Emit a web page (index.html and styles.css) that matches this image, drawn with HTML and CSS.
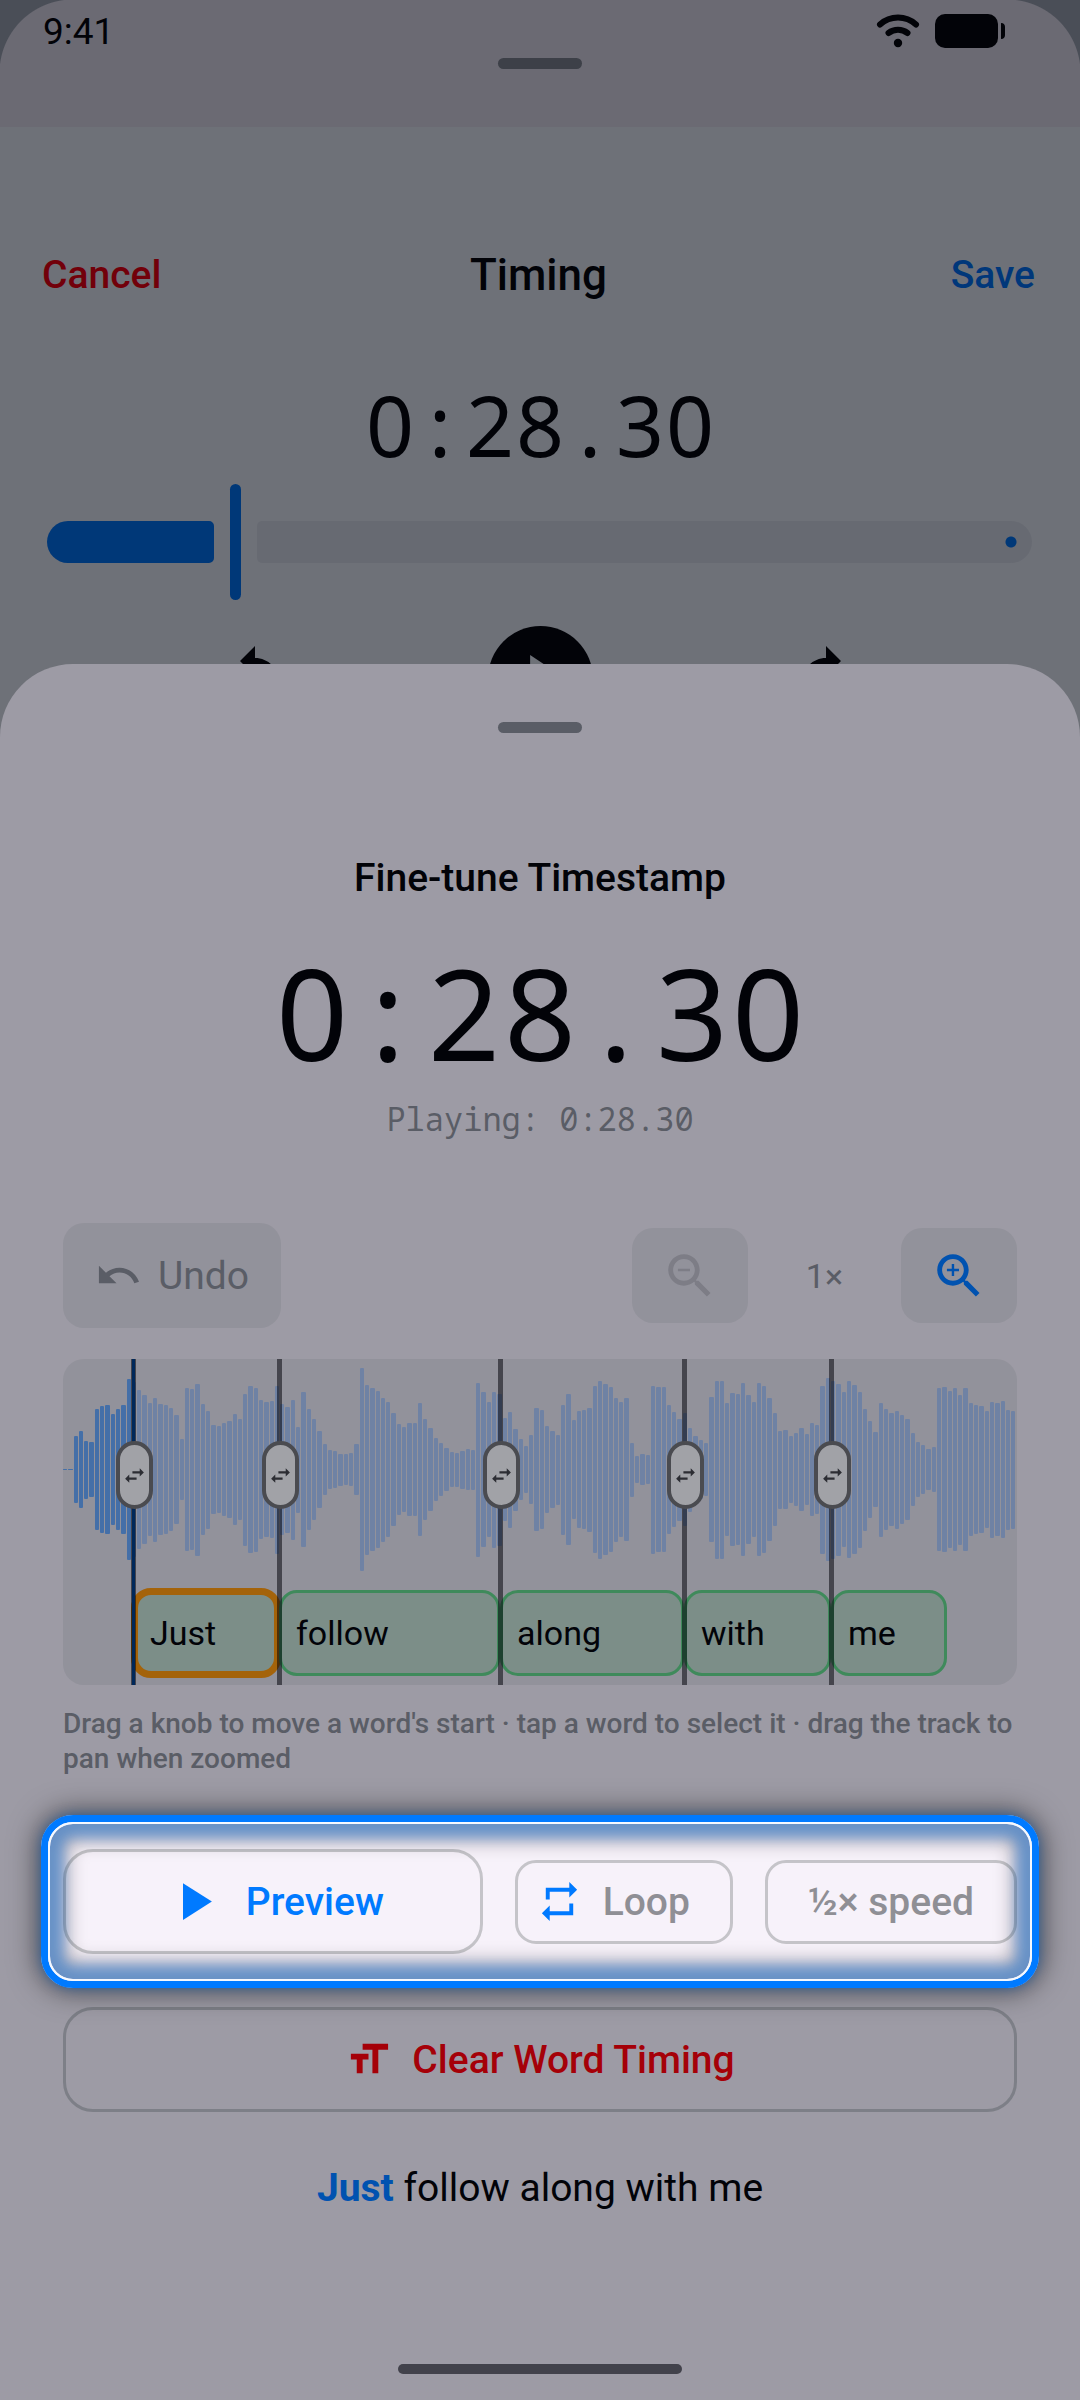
FILE: index.html
```html
<!DOCTYPE html>
<html lang="en">
<head>
    <meta charset="UTF-8">
    <meta name="viewport" content="width=device-width, initial-scale=1.0">
    <title>Fine-tune Timestamp</title>
    <link rel="stylesheet" href="styles.css">
</head>
<body>
    <div class="timing-screen">
        <div class="top-strip">
            <div class="status-bar">
                <span class="status-time">9:41</span>
                <div class="status-icons">
                    <svg class="wifi" viewBox="0 0 44 36" aria-hidden="true">
                        <path d="M4 11.500a27 27 0 0 1 36 0" fill="none" stroke="currentColor" stroke-width="6" stroke-linecap="round"/>
                        <path d="M12.500 20a16 16 0 0 1 19 0" fill="none" stroke="currentColor" stroke-width="6" stroke-linecap="round"/>
                        <circle cx="22" cy="30" r="4.200" fill="currentColor"/>
                    </svg>
                    <svg class="battery" viewBox="0 0 72 36" aria-hidden="true">
                        <rect x="0" y="1" width="63" height="34" rx="10" fill="currentColor"/>
                        <path d="M66 10c3 0 4 2 4 4v8c0 2-1 4-4 4z" fill="currentColor"/>
                    </svg>
                </div>
            </div>
            <div class="handle"></div>
        </div>

        <div class="nav">
            <button class="nav-cancel" type="button">Cancel</button>
            <h1>Timing</h1>
            <button class="nav-save" type="button">Save</button>
        </div>

        <div class="clock clock-small">
            <span>0</span><span>:</span><span>2</span><span>8</span><span>.</span><span>3</span><span>0</span>
        </div>

        <div class="slider">
            <div class="slider-active"></div>
            <div class="slider-thumb"></div>
            <div class="slider-rest"></div>
            <input type="range" min="0" max="100" value="18" aria-label="Playback position">
        </div>

        <div class="player">
            <button type="button" aria-label="Back">
                <svg viewBox="0 0 24 24"><path d="M12 5V1L7 6l5 5V7c3.310 0 6 2.690 6 6s-2.690 6-6 6-6-2.690-6-6H4c0 4.420 3.580 8 8 8s8-3.580 8-8-3.580-8-8-8z"/></svg>
            </button>
            <button class="player-play" type="button" aria-label="Play">
                <svg viewBox="0 0 24 24"><path d="M8.700 4l12 8-12 8z"/></svg>
            </button>
            <button type="button" aria-label="Forward">
                <svg viewBox="0 0 24 24"><path d="M12 5V1l5 5-5 5V7c-3.310 0-6 2.690-6 6s2.690 6 6 6 6-2.690 6-6h2c0 4.420-3.580 8-8 8s-8-3.580-8-8 3.580-8 8-8z"/></svg>
            </button>
        </div>
    </div>

    <main class="sheet">
        <div class="handle"></div>
        <h2>Fine-tune Timestamp</h2>
        <div class="clock clock-large">
            <span>0</span><span>:</span><span>2</span><span>8</span><span>.</span><span>3</span><span>0</span>
        </div>
        <p class="playing">Playing: 0:28.30</p>

        <div class="toolbar">
            <button class="tool undo" type="button">
                <svg viewBox="0 0 24 24"><path d="M12.500 8c-2.650 0-5.050.990-6.900 2.600L2 7v9h9l-3.620-3.620c1.390-1.160 3.160-1.880 5.120-1.880 3.540 0 6.550 2.310 7.600 5.500l2.370-.780C21.080 11.030 17.150 8 12.500 8z"/></svg>
                Undo
            </button>
            <div class="zoom">
                <button class="tool zoom-out" type="button" aria-label="Zoom out" disabled>
                    <svg viewBox="0 0 24 24"><path d="M15.500 14h-.790l-.280-.270C15.410 12.590 16 11.110 16 9.500 16 5.910 13.090 3 9.500 3S3 5.910 3 9.500 5.910 16 9.500 16c1.610 0 3.090-.590 4.230-1.570l.270.280v.790l5 4.990L20.490 19l-4.990-5zm-6 0C7.010 14 5 11.990 5 9.500S7.010 5 9.500 5 14 7.010 14 9.500 11.990 14 9.500 14zM7 9h5v1H7z"/></svg>
                </button>
                <span class="zoom-level">1×</span>
                <button class="tool zoom-in" type="button" aria-label="Zoom in">
                    <svg viewBox="0 0 24 24"><path d="M15.500 14h-.790l-.280-.270C15.410 12.590 16 11.110 16 9.500 16 5.910 13.090 3 9.500 3S3 5.910 3 9.500 5.910 16 9.500 16c1.610 0 3.090-.590 4.230-1.570l.270.280v.790l5 4.990L20.490 19l-4.990-5zm-6 0C7.010 14 5 11.990 5 9.500S7.010 5 9.500 5 14 7.010 14 9.500 11.990 14 9.500 14zm.5-7H9v2H7v1h2v2h1v-2h2V9h-2V7z"/></svg>
                </button>
            </div>
        </div>

        <div class="track">
            <div class="waveform" id="waveform"></div>
            <div class="words" id="words"></div>
        </div>
        <p class="hint">Drag a knob to move a word's start · tap a word to select it · drag the track to pan when zoomed</p>

        <div class="spotlight">
            <button class="preview" type="button">
                <svg viewBox="0 0 24 24"><path d="M8 5v14l11-7z"/></svg>
                Preview
            </button>
            <button class="chip loop" type="button">
                <svg viewBox="0 0 24 24"><path d="M7 7h10v3l4-4-4-4v3H5v6h2V7zm10 10H7v-3l-4 4 4 4v-3h12v-6h-2v4z"/></svg>
                Loop
            </button>
            <button class="chip" type="button">½× speed</button>
        </div>

        <button class="clear" type="button">
            <svg viewBox="0 0 24 24"><path d="M9 4v3h5v12h3V7h5V4H9zm-6 8h3v7h3v-7h3V9H3v3z"/></svg>
            Clear Word Timing
        </button>
        <p class="lyric"><strong>Just</strong> follow along with me</p>
        <div class="home-indicator"></div>
    </main>

    <script src="script.js"></script>
</body>
</html>
```
FILE: styles.css
```css
* {
    box-sizing: border-box;
}
body {
    margin: 0;
    min-height: 100vh;
    display: flex;
    flex-direction: column;
    background-color: #6e7178;
    color: #020308;
    font-family: Roboto, sans-serif;
    font-size: 39px;
}
h1, h2, p {
    margin: 0;
}
button {
    font: inherit;
    color: inherit;
    background: none;
    border: none;
    padding: 0;
    display: flex;
    align-items: center;
    justify-content: center;
    cursor: pointer;
}
button svg {
    display: block;
    fill: currentColor;
    width: 47px;
    height: 47px;
}

/* Timing screen behind the sheet */
.top-strip {
    height: 127px;
    background: radial-gradient(circle at 73px 73px, #6b6a73 73px, #4a4e57 74px) left top / 73px 73px no-repeat,
        radial-gradient(circle at 0 73px, #6b6a73 73px, #4a4e57 74px) right top / 73px 73px no-repeat,
        #6b6a73;
}
.status-bar {
    display: flex;
    justify-content: space-between;
    align-items: center;
    height: 58px;
    padding: 4px 73px 0 43px;
}
.status-time {
    font-size: 37px;
}
.status-icons {
    display: flex;
    align-items: center;
    gap: 15px;
}
.wifi {
    width: 44px;
    height: 36px;
}
.battery {
    width: 72px;
    height: 36px;
}
.handle {
    width: 84px;
    height: 11px;
    margin: 0 auto;
    border-radius: 6px;
    background-color: #3d4048;
}
.nav {
    display: grid;
    grid-template-columns: 1fr auto 1fr;
    align-items: center;
    padding: 121px 45px 0 42px;
    font-weight: 500;
}
.nav h1 {
    font-size: 44px;
    font-weight: 500;
    line-height: 54px;
}
.nav-cancel {
    justify-self: start;
    color: #72000a;
}
.nav-save {
    justify-self: end;
    color: #00377a;
}
.clock {
    display: flex;
    justify-content: center;
    font-family: "Noto Sans", sans-serif;
}
.clock span {
    text-align: center;
}
.clock-small {
    margin-top: 66px;
    font-size: 84px;
    line-height: 114px;
}
.clock-small span {
    width: 50px;
}
.slider {
    position: relative;
    display: flex;
    align-items: center;
    gap: 16px;
    margin-top: 2px;
    padding: 0 48px 0 47px;
}
.slider-active {
    width: 17%;
    height: 42px;
    border-radius: 21px 5px 5px 21px;
    background-color: #003878;
}
.slider-thumb {
    width: 11px;
    height: 116px;
    border-radius: 6px;
    background-color: #003878;
}
.slider-rest {
    flex: 1;
    height: 42px;
    border-radius: 5px 21px 21px 5px;
    background: radial-gradient(circle at calc(100% - 21px) 50%, #003878 5px, #676a72 6px);
}
.slider input {
    position: absolute;
    inset: 0;
    width: 100%;
    margin: 0;
    opacity: 0;
}
.player {
    display: grid;
    grid-template-columns: repeat(3, 1fr);
    justify-items: center;
    align-items: center;
    padding: 26px 111px 0 112px;
}
.player svg {
    width: 72px;
    height: 72px;
}
.player-play {
    width: 105px;
    height: 105px;
    border-radius: 50%;
    background-color: #020308;
    color: #6e7178;
}

/* Fine-tune sheet */
.sheet {
    position: relative;
    flex: 1;
    display: flex;
    flex-direction: column;
    margin-top: -67px;
    padding: 58px 63px 26px;
    border-radius: 73px 73px 0 0;
    background-color: #9d9ba5;
}
.sheet .handle {
    background-color: #5a5d66;
}
h2 {
    margin-top: 121px;
    font-size: 39px;
    font-weight: 500;
    line-height: 48px;
    text-align: center;
}
.clock-large {
    margin-top: 24px;
    font-size: 126px;
    line-height: 172px;
}
.clock-large span {
    width: 76px;
}
.playing {
    margin-top: 1px;
    color: #5a5d66;
    font-family: "Droid Sans Mono", "Noto Sans Mono", "DejaVu Sans Mono", monospace;
    font-size: 32px;
    line-height: 40px;
    text-align: center;
}
.toolbar {
    display: flex;
    justify-content: space-between;
    align-items: center;
    margin-top: 84px;
}
.tool {
    border-radius: 21px;
    background-color: #92929b;
}
.undo {
    gap: 16px;
    height: 105px;
    padding: 0 32px;
    color: #5a5d66;
}
.zoom {
    display: flex;
    align-items: center;
}
.zoom .tool {
    width: 116px;
    height: 95px;
}
.zoom svg {
    width: 58px;
    height: 58px;
}
.zoom-out {
    color: #7d7d86;
}
.zoom-in {
    color: #0052b0;
}
.zoom-level {
    width: 153px;
    color: #5a5d66;
    font-size: 34px;
    text-align: center;
}
.track {
    position: relative;
    height: 326px;
    margin-top: 31px;
    padding-bottom: 9px;
    border-radius: 21px;
    background-color: #92929b;
}
.waveform {
    display: flex;
    align-items: center;
    gap: 1px;
    height: 221px;
    padding-right: 1px;
}
.bar {
    flex: 1;
    border-radius: 1px;
    background-color: #6f82a4;
}
.bar.played {
    background-color: #446fa8;
}
.words {
    display: flex;
    height: 86px;
    margin-top: 10px;
}
.word {
    justify-content: flex-start;
    padding: 0 14px;
    border: 3px solid #3f8a5b;
    border-radius: 18px;
    background-color: #7c8e88;
    font-size: 34px;
}
.word.selected {
    outline: 7px solid #a4630a;
    outline-offset: -5px;
}
.marker {
    position: absolute;
    top: 0;
    bottom: 0;
    width: 5px;
    margin-left: -2px;
    background-color: rgba(0, 0, 8, 0.53);
}
.marker.current {
    background-image: linear-gradient(90deg, transparent 1px, #00285a 1px, #00285a 4px, transparent 4px);
}
.knob {
    position: absolute;
    left: -15px;
    top: 82px;
    width: 37px;
    height: 68px;
    border: 4px solid #4a4b50;
    border-radius: 19px;
    background-color: #a1a2a7;
    color: #2c2d33;
}
.knob svg {
    flex: none;
    width: 25px;
    height: 25px;
}
.hint {
    margin-top: 21px;
    color: #5a5d66;
    font-size: 28px;
    font-weight: 500;
    line-height: 35px;
}
.spotlight {
    position: relative;
    display: flex;
    align-items: center;
    gap: 32px;
    margin: 39px -22px 0;
    padding: 34px 22px;
    border-radius: 32px;
    background-color: #f7f2fa;
    color: #8f8f95;
    font-weight: 500;
}
.spotlight::before {
    content: "";
    position: absolute;
    inset: 0;
    border: 7px solid #007aff;
    border-radius: 32px;
    box-shadow: 0 0 12px rgba(0, 90, 190, 0.5), 0 0 28px 4px rgba(0, 0, 0, 0.5);
    pointer-events: none;
}
.spotlight::after {
    content: "";
    position: absolute;
    inset: 7px;
    border: 2px solid #f4f8ff;
    border-radius: 25px;
    box-shadow: inset 0 0 12px 14px rgba(0, 122, 255, 0.36), inset 0 0 20px 16px rgba(0, 0, 8, 0.36);
    pointer-events: none;
}
.preview {
    flex: 1;
    gap: 21px;
    height: 105px;
    border: 3px solid #c5c4c9;
    border-radius: 30px;
    color: #007aff;
}
.preview svg {
    width: 63px;
    height: 63px;
}
.chip {
    height: 84px;
    padding: 0 40px;
    border: 3px solid #c5c4c9;
    border-radius: 21px;
}
.loop {
    gap: 20px;
    padding-left: 18px;
}
.loop svg {
    color: #007aff;
}
.clear {
    gap: 20px;
    height: 105px;
    margin-top: 19px;
    border: 3px solid #7d7f87;
    border-radius: 30px;
    color: #a50008;
    font-weight: 500;
}
.lyric {
    margin-top: 52px;
    line-height: 48px;
    text-align: center;
}
.lyric strong {
    color: #0052b0;
}
.home-indicator {
    width: 284px;
    height: 10px;
    margin: auto auto 0;
    border-radius: 5px;
    background-color: #42424b;
}
```
FILE: script.js
```js
const TRACK_LENGTH = 954;
const WAVE_HEIGHT = 221;

const peaks = [
    2, 2, 67, 77, 58, 55, 121, 127, 129, 111, 121, 129, 181, 175, 159, 149, 133, 144, 131, 129,
    123, 109, 61, 163, 161, 172, 131, 118, 89, 87, 93, 97, 111, 101, 152, 167, 164, 139, 135, 137,
    168, 131, 126, 140, 86, 155, 121, 101, 77, 51, 39, 37, 32, 31, 33, 51, 203, 170, 163, 157,
    144, 135, 113, 91, 85, 93, 93, 133, 101, 83, 63, 53, 43, 35, 34, 38, 41, 40, 174, 155,
    135, 156, 152, 103, 116, 82, 61, 47, 69, 123, 119, 87, 77, 70, 130, 151, 99, 117, 119, 124,
    167, 178, 171, 165, 144, 135, 143, 54, 27, 31, 29, 168, 165, 165, 129, 115, 102, 113, 84, 67,
    59, 53, 145, 178, 178, 133, 153, 151, 173, 149, 135, 173, 167, 143, 113, 78, 79, 67, 73, 83,
    71, 93, 89, 168, 183, 178, 172, 155, 177, 169, 156, 122, 97, 75, 134, 121, 113, 118, 109, 101,
    73, 55, 49, 41, 45, 163, 165, 158, 163, 150, 163, 133, 129, 127, 117, 136, 133, 137, 120, 118
];

const words = [
    { text: 'Just', start: 70, end: 216, selected: true },
    { text: 'follow', start: 216, end: 437 },
    { text: 'along', start: 437, end: 621 },
    { text: 'with', start: 621, end: 768 },
    { text: 'me', start: 768, end: 884 }
];

const percent = value => (value / TRACK_LENGTH * 100) + '%';

const waveform = document.getElementById('waveform');
peaks.forEach((peak, i) => {
    const bar = document.createElement('div');
    bar.className = i < 13 ? 'bar played' : 'bar';
    bar.style.height = (peak / WAVE_HEIGHT * 100) + '%';
    waveform.appendChild(bar);
});

const wordRow = document.getElementById('words');
wordRow.style.paddingLeft = percent(words[0].start);
words.forEach(word => {
    const button = document.createElement('button');
    button.type = 'button';
    button.className = word.selected ? 'word selected' : 'word';
    button.style.width = (word.end - word.start) / (TRACK_LENGTH - words[0].start) * 100 + '%';
    button.textContent = word.text;
    wordRow.appendChild(button);

    const marker = document.createElement('div');
    marker.className = word.selected ? 'marker current' : 'marker';
    marker.style.left = percent(word.start);
    marker.innerHTML = `
        <button class="knob" type="button" aria-label="Start of ${word.text}">
            <svg viewBox="0 0 24 24"><path d="M6.990 11L3 15l3.990 4v-3H14v-2H6.990v-3zM21 9l-3.990-4v3H10v2h7.010v3L21 9z"/></svg>
        </button>`;
    wordRow.parentElement.appendChild(marker);
});
```
